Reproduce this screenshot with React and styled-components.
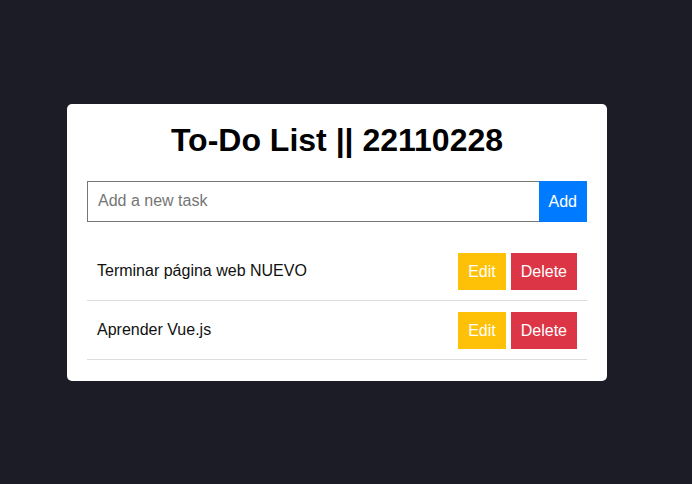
import styled, { createGlobalStyle } from "styled-components";

const tasks = ["Terminar página web NUEVO", "Aprender Vue.js"];

const App = () => {
  return (
    <>
      <Global />
      <Page>
        <Card>
          <Title>To-Do List || 22110228</Title>
          <Form>
            <Input placeholder="Add a new task" />
            <Button $bg="#007bff">Add</Button>
          </Form>
          <List>
            {tasks.map((t) => (
              <Item key={t}>
                <span>{t}</span>
                <Actions>
                  <Button $bg="#ffc107">Edit</Button>
                  <Button $bg="#dc3545">Delete</Button>
                </Actions>
              </Item>
            ))}
          </List>
        </Card>
      </Page>
    </>
  );
};

const Global = createGlobalStyle`
  html, body {
    margin: 0;
    background: #1c1c27;
    font-family: "Liberation Sans", Arial, sans-serif;
  }
`;

const Page = styled.div`
  height: 484px;
  display: flex;
  align-items: center;
  justify-content: center;
  padding-right: 18px;
  box-sizing: border-box;
`;

const Card = styled.div`
  width: 500px;
  padding: 20px 20px 21px;
  background: #fff;
  border-radius: 5px;
`;

const Title = styled.h1`
  margin: 0 0 20px;
  font-size: 32px;
  line-height: 37px;
  text-align: center;
  color: #000;
  position: relative;
  top: -2px;
`;

const Form = styled.div`
  display: flex;
  margin-bottom: 20px;
`;

const Input = styled.input`
  flex: 1;
  height: 41px;
  box-sizing: border-box;
  padding: 10px;
  font-size: 16px;
  font-family: inherit;
  border: 1px solid #767676;
  border-right: none;
  outline: none;
  &::placeholder {
    color: #757575;
  }
`;

const Button = styled.button`
  border: none;
  background: ${(p) => p.$bg};
  color: #fff;
  font-size: 16px;
  font-family: inherit;
  padding: 10px;
  line-height: 17px;
  min-height: 37px;
  cursor: pointer;
`;

const List = styled.ul`
  list-style: none;
  margin: 0;
  padding: 0;
`;

const Item = styled.li`
  display: flex;
  align-items: center;
  justify-content: space-between;
  padding: 11px 10px 10px;
  border-bottom: 1px solid #ddd;
  font-size: 16px;
  color: #111;
`;

const Actions = styled.div`
  display: flex;
  gap: 5px;
`;

export default App;
